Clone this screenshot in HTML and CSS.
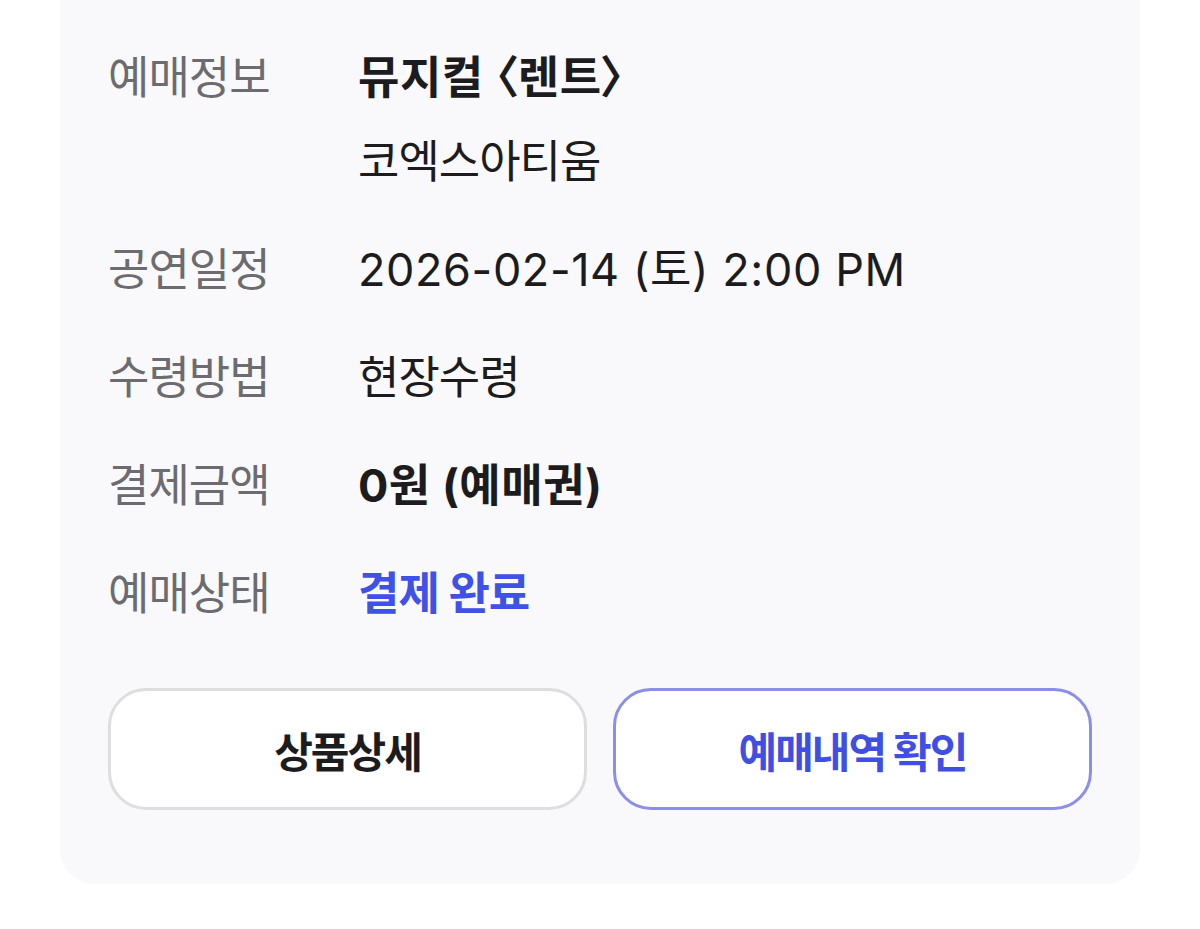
FILE: index.html
```html
<!DOCTYPE html>
<html lang="ko">
<head>
<meta charset="utf-8">
<link rel="stylesheet" href="styles.css">
</head>
<body>
<div class="page">
  <section class="card">
    <dl class="info">
      <div class="row">
        <dt class="label">예매정보</dt>
        <dd class="value">
          <div class="strong title">뮤지컬 〈렌트〉</div>
          <div>코엑스아티움</div>
        </dd>
      </div>
      <div class="row">
        <dt class="label">공연일정</dt>
        <dd class="value date">2026-02-14 (토) 2:00 PM</dd>
      </div>
      <div class="row">
        <dt class="label">수령방법</dt>
        <dd class="value">현장수령</dd>
      </div>
      <div class="row">
        <dt class="label">결제금액</dt>
        <dd class="value strong price">0원 (예매권)</dd>
      </div>
      <div class="row">
        <dt class="label">예매상태</dt>
        <dd class="value strong accent">결제 완료</dd>
      </div>
    </dl>
    <div class="actions">
      <button class="btn">상품상세</button>
      <button class="btn btn-primary">예매내역 확인</button>
    </div>
  </section>
</div>
</body>
</html>
```

FILE: styles.css
```css
html, body {
  margin: 0;
  padding: 0;
  background: #ffffff;
}
body {
  font-family: "Inter", "Noto Sans CJK KR", sans-serif;
  color: #1c1c1e;
}
.page {
  padding: 0 60px;
}
.card {
  background: #f9f9fb;
  border-radius: 0 0 34px 34px;
  padding: 36px 48px 74px;
}
.info {
  margin: 0;
  display: flex;
  flex-direction: column;
  gap: 24px;
}
.row {
  display: flex;
  align-items: flex-start;
}
.label {
  width: 250px;
  flex: none;
  font-size: 45px;
  line-height: 84px;
  color: #6b6b70;
  letter-spacing: -1px;
}
.value {
  margin: 0;
  font-size: 45px;
  line-height: 84px;
  color: #1c1c1e;
  letter-spacing: -1px;
}
.title {
  font-feature-settings: "palt";
  letter-spacing: 0.5px;
}
.date {
  letter-spacing: 0.6px;
}
.price {
  letter-spacing: 0.5px;
}
.strong {
  font-weight: 700;
}
.accent {
  color: #3f51e6;
}
.actions {
  display: grid;
  grid-template-columns: 1fr 1fr;
  gap: 26px;
  margin-top: 52px;
}
.btn {
  height: 122px;
  border: 3px solid #dedede;
  border-radius: 38px;
  background: #ffffff;
  font-family: "Inter", "Noto Sans CJK KR", sans-serif;
  font-size: 42px;
  font-weight: 700;
  color: #1c1c1e;
  letter-spacing: -2px;
}
.btn-primary {
  border-color: #8b8fe8;
  color: #3f4fe3;
}
```
